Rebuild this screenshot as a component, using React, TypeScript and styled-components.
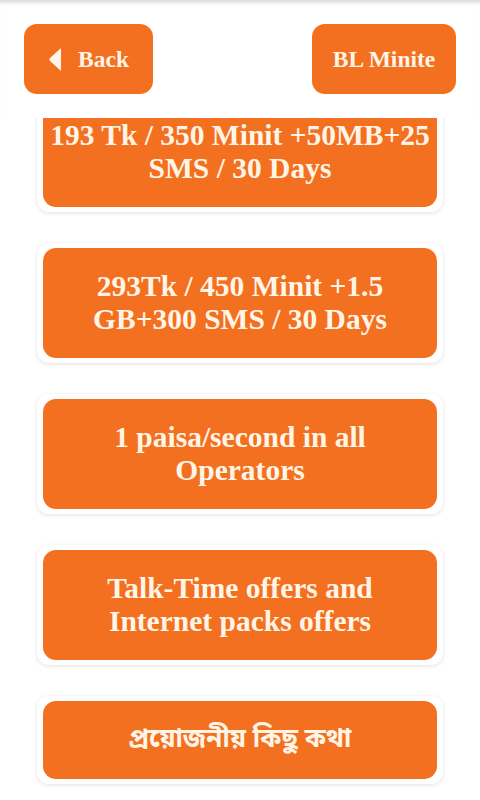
import { useEffect, useRef } from "react";
import styled, { createGlobalStyle } from "styled-components";

const GlobalStyle = createGlobalStyle`
  html, body {
    margin: 0;
    padding: 0;
    background: #ffffff;
  }
  * {
    box-sizing: border-box;
  }
`;

const Screen = styled.div`
  width: 480px;
  height: 800px;
  display: flex;
  flex-direction: column;
  background: #ffffff;
  font-family: "Liberation Serif", "DejaVu Serif", serif;
  overflow: hidden;
`;

const Header = styled.div`
  flex: 0 0 118px;
  display: flex;
  justify-content: space-between;
  align-items: flex-start;
  padding: 24px 24px 0 24px;
  background: #ffffff;
  box-shadow: inset 0 5px 4px -3px rgba(0, 0, 0, 0.18);
  position: relative;
  z-index: 2;
`;

const TopButton = styled.button<{ $width: number }>`
  width: ${(p) => p.$width}px;
  height: 70px;
  display: flex;
  align-items: center;
  justify-content: center;
  gap: 16px;
  border: none;
  border-radius: 13px;
  background: #f37021;
  color: #fff5e6;
  font-family: inherit;
  font-weight: bold;
  font-size: 23.5px;
  padding: 0;
`;

const List = styled.div`
  flex: 1;
  overflow-y: auto;
  scrollbar-width: none;
  padding: 0 37px 30px 37px;
  display: flex;
  flex-direction: column;
  gap: 31px;
  &::-webkit-scrollbar {
    display: none;
  }
`;

const Card = styled.div`
  flex: 0 0 auto;
  padding: 5px 6px;
  background: #ffffff;
  border-radius: 12px;
  box-shadow: 0 1px 4px rgba(0, 0, 0, 0.12);
`;

const Offer = styled.button<{ $height: number }>`
  width: 100%;
  height: ${(p) => p.$height}px;
  display: flex;
  flex-direction: column;
  align-items: center;
  justify-content: center;
  text-align: center;
  border: none;
  border-radius: 13px;
  background: #f37021;
  color: #fff5e6;
  font-family: inherit;
  font-weight: bold;
  font-size: 29.5px;
  line-height: 33px;
  padding: 0 4px;
`;

const Line = styled.span`
  display: block;
  white-space: nowrap;
`;

const BanglaOffer = styled(Offer)`
  font-family: "Noto Sans Bengali", "Lohit Bengali", "Noto Sans", sans-serif;
  font-size: 26px;
`;

const offers = [
  ["193 Tk / 350 Minit +50MB+25", "SMS / 30 Days"],
  ["293Tk / 450 Minit +1.5", "GB+300 SMS / 30 Days"],
  ["1 paisa/second in all", "Operators"],
  ["Talk-Time offers and", "Internet packs offers"],
];

function BackArrow() {
  return (
    <svg width="14" height="25" viewBox="0 0 14 25">
      <path d="M13 1 L13 24 L2 14 Q0.5 12.5 2 11 Z" fill="#fff5e6" />
    </svg>
  );
}

export default function App() {
  const listRef = useRef<HTMLDivElement>(null);

  // the list is shown scrolled a little, with the first offer under the header
  useEffect(() => {
    if (listRef.current) listRef.current.scrollTop = 26;
  }, []);

  return (
    <Screen>
      <GlobalStyle />
      <Header>
        <TopButton $width={129}>
          <BackArrow />
          Back
        </TopButton>
        <TopButton $width={144}>BL Minite</TopButton>
      </Header>
      <List ref={listRef}>
        {offers.map((lines) => (
          <Card key={lines[0]}>
            <Offer $height={110}>
              {lines.map((line) => (
                <Line key={line}>{line}</Line>
              ))}
            </Offer>
          </Card>
        ))}
        <Card>
          <BanglaOffer $height={78}>প্রয়োজনীয় কিছু কথা</BanglaOffer>
        </Card>
      </List>
    </Screen>
  );
}
